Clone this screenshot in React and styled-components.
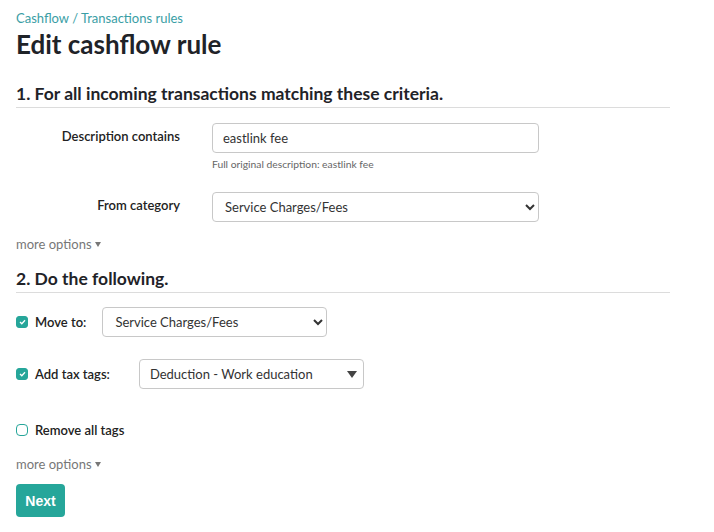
import React from 'react';
import styled, { createGlobalStyle } from 'styled-components';

const GlobalStyle = createGlobalStyle`
  body {
    margin: 0;
    background: #fff;
    font-family: Lato, "Noto Sans", sans-serif;
    color: #222;
  }
`

const Page = styled.div`
  padding: 10px 44px 0 16px;
  width: 654px;
`

const Crumb = styled.div`
  font-size: 13px;
  color: #3a9ea5;
  line-height: 16px;
`

const Title = styled.h1`
  margin: 2px 0 0;
  font-size: 26px;
  font-weight: 700;
  line-height: 32px;
  color: #1f2328;
`

const SectionHead = styled.h3`
  margin: ${p => p.top}px 0 0;
  font-size: 17.5px;
  font-weight: 700;
  line-height: 22px;
  padding-bottom: 2px;
  border-bottom: 1px solid #dcdcdc;
  color: #1f2328;
`

const FieldRow = styled.div`
  display: grid;
  grid-template-columns: 164px 327px;
  column-gap: 32px;
  margin-top: ${p => p.top}px;
`

const Label = styled.label`
  text-align: right;
  font-size: 13px;
  font-weight: 600;
  padding-top: 5px;
  color: #222;
`

const Field = styled.div`
  display: flex;
  flex-direction: column;
`

const TextInput = styled.input`
  box-sizing: border-box;
  height: 30px;
  border: 1px solid #c8c8c8;
  border-radius: 4px;
  padding: 0 10px;
  font-family: inherit;
  font-size: 13px;
  color: #333;
`

const Help = styled.div`
  font-size: 10.3px;
  color: #666;
  margin-top: 5px;
`

const Select = styled.select`
  box-sizing: border-box;
  width: ${p => p.w}px;
  height: 30px;
  border: 1px solid #c8c8c8;
  border-radius: 4px;
  padding: 0 8px;
  font-family: inherit;
  font-size: 13px;
  color: #333;
  background: #fff;
`

const FakeSelect = styled.div`
  box-sizing: border-box;
  width: ${p => p.w}px;
  height: 30px;
  border: 1px solid #c8c8c8;
  border-radius: 4px;
  padding: 0 10px;
  font-size: 13px;
  color: #333;
  display: flex;
  align-items: center;
  justify-content: space-between;
`

const Caret = styled.span`
  width: 0;
  height: 0;
  border-left: 5px solid transparent;
  border-right: 5px solid transparent;
  border-top: 7px solid #444;
  margin-right: -4px;
`

const More = styled.div`
  margin-top: ${p => p.top}px;
  font-size: 13px;
  color: #777;
  display: flex;
  align-items: center;
  gap: 3px;
`

const SmallCaret = styled.span`
  width: 0;
  height: 0;
  border-left: 3.5px solid transparent;
  border-right: 3.5px solid transparent;
  border-top: 5px solid #777;
`

const CheckRow = styled.div`
  display: flex;
  align-items: center;
  margin-top: ${p => p.top}px;
`

const Box = styled.span`
  box-sizing: border-box;
  width: 12px;
  height: 12px;
  border-radius: ${p => (p.checked ? 3 : 4)}px;
  border: 1.5px solid #26a69a;
  background: ${p => (p.checked ? '#26a69a' : '#fff')};
  display: flex;
  align-items: center;
  justify-content: center;
  margin-right: 7px;
`

const CheckLabel = styled.span`
  font-size: 13px;
  font-weight: 600;
  color: #222;
  margin-right: ${p => p.gap || 0}px;
`

const Button = styled.button`
  margin-top: 12px;
  height: 33px;
  width: 49px;
  border: none;
  border-radius: 4px;
  background: #26a69a;
  color: #fff;
  font-family: "Liberation Sans", Arial, sans-serif;
  font-size: 14px;
  font-weight: 700;
`

const Tick = () => (
  <svg width="7" height="6" viewBox="0 0 7 6">
    <path d="M1 3 L2.8 4.7 L6 1.2" fill="none" stroke="#fff" strokeWidth="1.3" />
  </svg>
);

export default function App() {
  return (
    <Page>
      <GlobalStyle />
      <Crumb>Cashflow / Transactions rules</Crumb>
      <Title>Edit cashflow rule</Title>

      <SectionHead top={23}>1. For all incoming transactions matching these criteria.</SectionHead>

      <FieldRow top={15}>
        <Label>Description contains</Label>
        <Field>
          <TextInput defaultValue="eastlink fee" />
          <Help>Full original description: eastlink fee</Help>
        </Field>
      </FieldRow>

      <FieldRow top={22}>
        <Label>From category</Label>
        <Select w={327} defaultValue="fees">
          <option value="fees">Service Charges/Fees</option>
        </Select>
      </FieldRow>

      <More top={14}>more options <SmallCaret /></More>

      <SectionHead top={16}>2. Do the following.</SectionHead>

      <CheckRow top={14}>
        <Box checked><Tick /></Box>
        <CheckLabel gap={16}>Move to:</CheckLabel>
        <Select w={225} defaultValue="fees">
          <option value="fees">Service Charges/Fees</option>
        </Select>
      </CheckRow>

      <CheckRow top={22}>
        <Box checked><Tick /></Box>
        <CheckLabel gap={29}>Add tax tags:</CheckLabel>
        <FakeSelect w={225}>
          Deduction - Work education
          <Caret />
        </FakeSelect>
      </CheckRow>

      <CheckRow top={33}>
        <Box />
        <CheckLabel>Remove all tags</CheckLabel>
      </CheckRow>

      <More top={18}>more options <SmallCaret /></More>

      <Button>Next</Button>
    </Page>
  );
}
